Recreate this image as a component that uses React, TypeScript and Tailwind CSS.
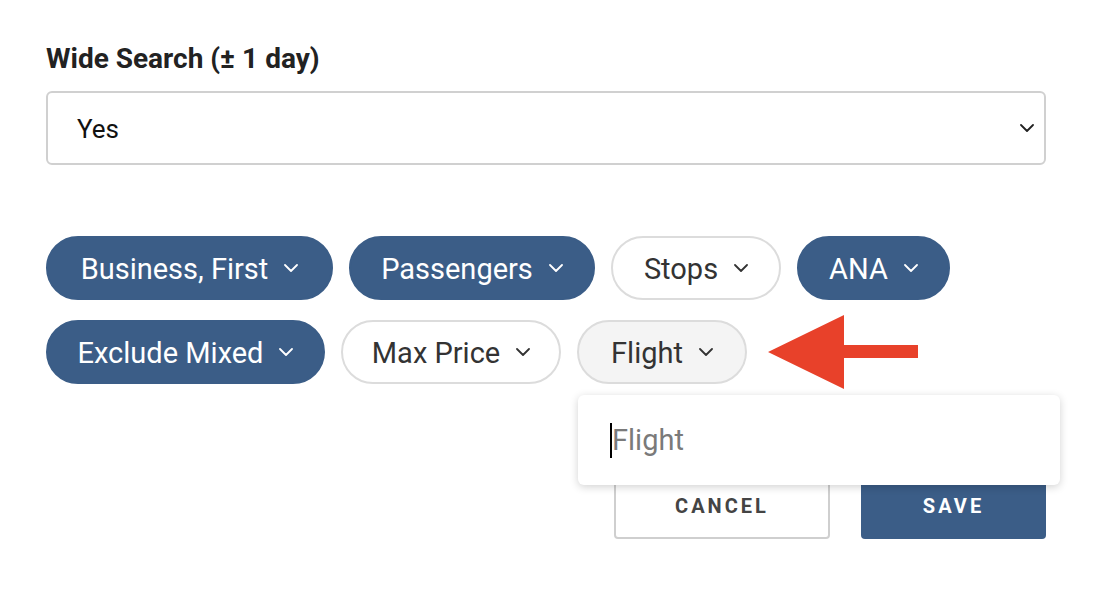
interface PillProps {
  label: string;
  width: string;
  active?: boolean;
  open?: boolean;
}

const Chevron = ({ className = "" }: { className?: string }) => (
  <svg className={className} width="14" height="8" viewBox="0 0 14 8" fill="none">
    <polyline points="1,1 7,7 13,1" stroke="currentColor" strokeWidth="1.8" strokeLinecap="round" strokeLinejoin="round" />
  </svg>
);

const Pill = ({ label, width, active = false, open = false }: PillProps) => {
  const tone = active
    ? "bg-[#3b5d87] border-[#3b5d87] text-white"
    : open
      ? "bg-[#f4f4f4] border-[#dcdcdc] text-[#333]"
      : "bg-white border-[#dcdcdc] text-[#333]";
  return (
    <button
      className={`flex h-16 shrink-0 items-center justify-center gap-[16px] rounded-full border-2 pt-[3px] text-[29px] leading-none ${width} ${tone}`}
    >
      <span>{label}</span>
      <Chevron className="-mt-[3px]" />
    </button>
  );
};

const App = () => {
  return (
    <div
      className="h-[590px] w-[1102px] bg-white pl-[46px] pr-[56px] pt-[45px]"
      style={{ fontFamily: "Roboto, 'Liberation Sans', sans-serif" }}
    >
      {/* Wide search */}
      <label className="block text-[28px] font-bold leading-none text-[#222]">
        Wide Search (± 1 day)
      </label>
      <div className="mt-[18px] flex h-[74px] items-center justify-between rounded-md border-2 border-[#d0d0d0] pl-[29px] pr-[10px]">
        <span className="pt-[2px] text-[26px] text-[#111]">Yes</span>
        <Chevron className="text-[#222]" />
      </div>

      {/* Filter pills */}
      <div className="mt-[71px] flex flex-col gap-5">
        <div className="flex gap-4">
          <Pill label="Business, First" width="w-[287px]" active />
          <Pill label="Passengers" width="w-[246px]" active />
          <Pill label="Stops" width="w-[170px]" />
          <Pill label="ANA" width="w-[153px]" active />
        </div>
        <div className="flex gap-4">
          <Pill label="Exclude Mixed" width="w-[279px]" active />
          <Pill label="Max Price" width="w-[220px]" />
          <div className="relative">
            <Pill label="Flight" width="w-[170px]" open />
            <div className="absolute left-px top-[75px] z-10 flex h-[90px] w-[482px] items-center rounded-md bg-white pl-[32px] shadow-[0_2px_8px_rgba(0,0,0,0.18)]">
              <span className="h-[35px] w-[2px] bg-black" />
              <span className="pt-[2px] text-[29px] text-[#7a7a7a]">Flight</span>
            </div>
            {/* annotation arrow */}
            <svg
              className="absolute left-[191px] top-[-5px]"
              width="152"
              height="74"
              viewBox="0 0 152 74"
            >
              <polygon points="0,37 76,0 76,30 150,30 150,43 76,43 76,74" fill="#e8412a" />
            </svg>
          </div>
        </div>
      </div>

      {/* Actions */}
      <div className="mt-[87px] flex justify-end gap-[31px]">
        <button className="h-[68px] w-[216px] rounded border-2 border-[#cfcfcf] pt-[2px] text-[20px] font-bold tracking-[3px] text-[#444]">
          CANCEL
        </button>
        <button className="h-[68px] w-[185px] rounded bg-[#3b5d87] pt-[2px] text-[20px] font-bold tracking-[3px] text-white">
          SAVE
        </button>
      </div>
    </div>
  );
};

export default App;
